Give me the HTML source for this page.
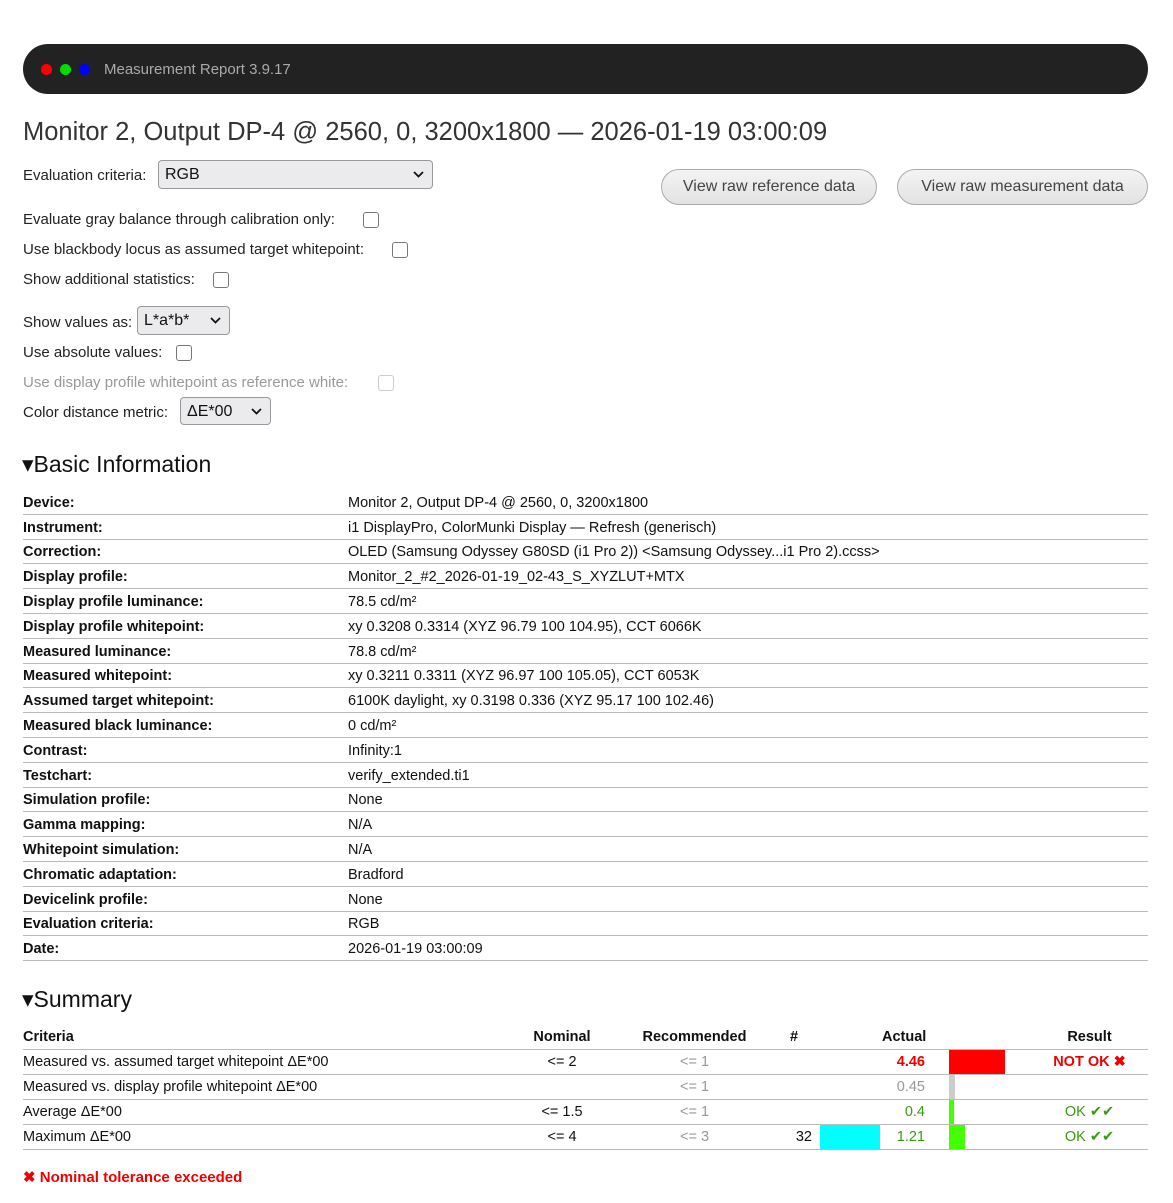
<!DOCTYPE html>
<html><head><meta charset="utf-8"><style>
body{margin:0;background:#fff;font-family:"Liberation Sans",sans-serif;color:#222;font-size:15px;width:1173px;height:1203px;position:relative;overflow:hidden}
.a{position:absolute;white-space:nowrap}
.bar{position:absolute;left:23px;top:44px;width:1125px;height:50px;background:#222;border-radius:25px}
.dot{position:absolute;top:64px;width:11px;height:11px;border-radius:50%}
.sel{position:absolute;border:1px solid #999;border-radius:4px;background:#ebebed;height:27px;box-sizing:border-box;font-size:16px;color:#111;padding:5px 6px 0}
.sel svg{position:absolute;right:8px;top:10px}
.cb{position:absolute;width:14px;height:14px;border:1px solid #777;border-radius:3px;background:#fff}
.btn{position:absolute;top:169px;height:36px;border:1px solid #aaa;border-radius:18px;background:linear-gradient(#f4f4f4,#e2e2e2);box-sizing:border-box;font-size:16px;color:#444;text-align:center;line-height:34px}
h2{position:absolute;margin:0;font-weight:normal;font-size:23px;color:#111}
table{position:absolute;border-collapse:collapse;font-size:14.5px;color:#111;table-layout:fixed}
.info td{height:21.8px;border-bottom:1px solid #bbb;padding:0 0 2px 0;vertical-align:bottom;line-height:17px}
.info td:first-child{font-weight:bold;width:325px}
.sum td,.sum th{height:24px;border-bottom:1px solid #bbb;padding:0}
.sum th{font-weight:bold;height:24px}
.r{padding-left:22px!important}
.g{color:#999}.gr{color:#3a9a10}
</style></head><body>
<div class="bar"></div>
<div class="dot" style="left:41px;background:#f00"></div>
<div class="dot" style="left:60px;background:#0d0"></div>
<div class="dot" style="left:79px;background:#00f"></div>
<div class="a" style="left:104px;top:61px;color:#aaa;font-size:15px">Measurement Report 3.9.17</div>
<div class="a" style="left:23px;top:118px;font-size:25.5px;color:#333">Monitor 2, Output DP-4 @ 2560, 0, 3200x1800 — 2026-01-19 03:00:09</div>

<div class="a" style="left:23px;top:167px">Evaluation criteria:</div>
<div class="sel" style="left:158px;top:160px;width:275px;height:29px">RGB<svg width="11" height="7"><path d="M1 1l4.5 4.5L10 1" stroke="#111" stroke-width="1.8" fill="none"/></svg></div>
<div class="btn" style="left:661px;width:216px">View raw reference data</div>
<div class="btn" style="left:897px;width:251px">View raw measurement data</div>

<div class="a" style="left:23px;top:211px">Evaluate gray balance through calibration only:</div><div class="cb" style="left:363px;top:212px"></div>
<div class="a" style="left:23px;top:241px">Use blackbody locus as assumed target whitepoint:</div><div class="cb" style="left:392px;top:242px"></div>
<div class="a" style="left:23px;top:271px">Show additional statistics:</div><div class="cb" style="left:213px;top:272px"></div>
<div class="a" style="left:23px;top:314px">Show values as:</div>
<div class="sel" style="left:137px;top:306px;width:93px;height:29px">L*a*b*<svg width="11" height="7"><path d="M1 1l4.5 4.5L10 1" stroke="#111" stroke-width="1.8" fill="none"/></svg></div>
<div class="a" style="left:23px;top:344px">Use absolute values:</div><div class="cb" style="left:176px;top:345px"></div>
<div class="a" style="left:23px;top:374px;color:#999">Use display profile whitepoint as reference white:</div><div class="cb" style="left:378px;top:375px;border-color:#ccc"></div>
<div class="a" style="left:23px;top:404px">Color distance metric:</div>
<div class="sel" style="left:180px;top:397px;width:91px;height:28px">ΔE*00<svg width="11" height="7"><path d="M1 1l4.5 4.5L10 1" stroke="#111" stroke-width="1.8" fill="none"/></svg></div>

<h2 style="left:22px;top:451px">▾Basic Information</h2>
<table class="info" style="left:23px;top:490px;width:1125px">
<tr><td>Device:</td><td>Monitor 2, Output DP-4 @ 2560, 0, 3200x1800</td></tr>
<tr><td>Instrument:</td><td>i1 DisplayPro, ColorMunki Display — Refresh (generisch)</td></tr>
<tr><td>Correction:</td><td>OLED (Samsung Odyssey G80SD (i1 Pro 2)) &lt;Samsung Odyssey...i1 Pro 2).ccss&gt;</td></tr>
<tr><td>Display profile:</td><td>Monitor_2_#2_2026-01-19_02-43_S_XYZLUT+MTX</td></tr>
<tr><td>Display profile luminance:</td><td>78.5 cd/m²</td></tr>
<tr><td>Display profile whitepoint:</td><td>xy 0.3208 0.3314 (XYZ 96.79 100 104.95), CCT 6066K</td></tr>
<tr><td>Measured luminance:</td><td>78.8 cd/m²</td></tr>
<tr><td>Measured whitepoint:</td><td>xy 0.3211 0.3311 (XYZ 96.97 100 105.05), CCT 6053K</td></tr>
<tr><td>Assumed target whitepoint:</td><td>6100K daylight, xy 0.3198 0.336 (XYZ 95.17 100 102.46)</td></tr>
<tr><td>Measured black luminance:</td><td>0 cd/m²</td></tr>
<tr><td>Contrast:</td><td>Infinity:1</td></tr>
<tr><td>Testchart:</td><td>verify_extended.ti1</td></tr>
<tr><td>Simulation profile:</td><td>None</td></tr>
<tr><td>Gamma mapping:</td><td>N/A</td></tr>
<tr><td>Whitepoint simulation:</td><td>N/A</td></tr>
<tr><td>Chromatic adaptation:</td><td>Bradford</td></tr>
<tr><td>Devicelink profile:</td><td>None</td></tr>
<tr><td>Evaluation criteria:</td><td>RGB</td></tr>
<tr><td>Date:</td><td>2026-01-19 03:00:09</td></tr>
</table>

<h2 style="left:22px;top:986px">▾Summary</h2>
<table class="sum" style="left:23px;top:1025px;width:1125px">
<tr><th style="text-align:left;width:480px">Criteria</th><th style="width:118px">Nominal</th><th style="width:147px">Recommended</th><th style="width:52px">#</th><th style="width:62px"></th><th style="width:43px;text-align:right">Actual</th><th style="width:24px"></th><th style="width:60px"></th><th class="r">Result</th></tr>
<tr><td>Measured vs. assumed target whitepoint ΔE*00</td><td align="center">&lt;= 2</td><td align="center" class="g">&lt;= 1</td><td></td><td></td><td align="right" style="color:#e00;font-weight:bold">4.46</td><td></td><td style="padding:0"><div style="width:56px;height:24px;background:#f00"></div></td><td align="center" class="r" style="color:#e00;font-weight:bold">NOT OK ✖</td></tr>
<tr><td>Measured vs. display profile whitepoint ΔE*00</td><td></td><td align="center" class="g">&lt;= 1</td><td></td><td></td><td align="right" class="g">0.45</td><td></td><td><div style="width:6px;height:24px;background:#ccc"></div></td><td></td></tr>
<tr><td>Average ΔE*00</td><td align="center">&lt;= 1.5</td><td align="center" class="g">&lt;= 1</td><td></td><td></td><td align="right" class="gr">0.4</td><td></td><td><div style="width:5px;height:24px;background:#4f0"></div></td><td align="center" class="gr r">OK ✔✔</td></tr>
<tr><td>Maximum ΔE*00</td><td align="center">&lt;= 4</td><td align="center" class="g">&lt;= 3</td><td align="right" style="padding-right:8px">32</td><td><div style="width:60px;height:24px;background:#0ff"></div></td><td align="right" class="gr">1.21</td><td></td><td><div style="width:16px;height:24px;background:#4f0"></div></td><td align="center" class="gr r">OK ✔✔</td></tr>
</table>
<div class="a" style="left:23px;top:1168px;color:#e00;font-weight:bold">✖ Nominal tolerance exceeded</div>
</body></html>
